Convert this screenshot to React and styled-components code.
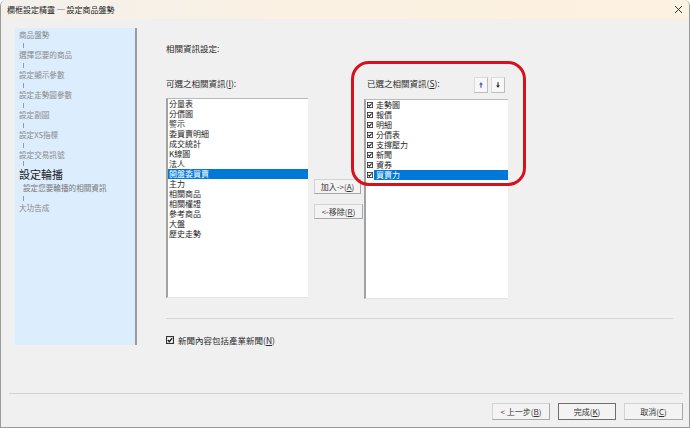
import React from "react";
import styled, { createGlobalStyle } from "styled-components";

const GlobalStyle = createGlobalStyle`
  html, body {
    margin: 0;
    padding: 0;
    background: #ffffff;
  }
  body {
    font-family: "Noto Sans CJK TC", "Noto Sans", sans-serif;
  }
`;

const sideSteps = [
  { text: "商品盤勢" },
  { text: "選擇您要的商品" },
  { text: "設定顯示參數" },
  { text: "設定走勢圖參數" },
  { text: "設定副圖" },
  { text: "設定XS指標" },
  { text: "設定交易訊號" },
  { text: "設定輪播", current: true, sub: "設定您要輪播的相關資訊" },
  { text: "大功告成" },
];

const availableItems = [
  "分量表",
  "分價圖",
  "警示",
  "委買賣明細",
  "成交統計",
  "K線圖",
  "法人",
  "開盤委買賣",
  "主力",
  "相關商品",
  "相關權證",
  "參考商品",
  "大盤",
  "歷史走勢",
];

const chosenItems = ["走勢圖", "報價", "明細", "分價表", "支撐壓力", "新聞", "資券", "買賣力"];

const CheckMark = ({ size = 7 }) => (
  <svg width={size} height={size} viewBox="0 0 7 7">
    <rect x="0.5" y="0.5" width="6" height="6" fill="#fff" stroke="#333" strokeWidth="1" />
    <path d="M1.6 3.4 L2.9 4.9 L5.4 1.8" fill="none" stroke="#111" strokeWidth="1.2" />
  </svg>
);

export default function App() {
  return (
    <>
      <GlobalStyle />
      <Window>
        <TitleBar>
          <Title>欄框設定精靈 ─ 設定商品盤勢</Title>
          <svg width="9" height="9" viewBox="0 0 9 9">
            <path d="M1 1 L8 8 M8 1 L1 8" stroke="#333" strokeWidth="1" />
          </svg>
        </TitleBar>

        <Body>
          <Sidebar>
            {sideSteps.map((s, i) => (
              <React.Fragment key={s.text}>
                {i > 0 && <Connector $short={s.current} />}
                <Step $current={s.current}>{s.text}</Step>
                {s.sub && <SubStep>{s.sub}</SubStep>}
              </React.Fragment>
            ))}
          </Sidebar>

          <Main>
            <Label>相關資訊設定:</Label>
            <Lists>
              <Column>
                <Header>
                  <Label>
                    可選之相關資訊(<u>I</u>):
                  </Label>
                </Header>
                <ListBox>
                  {availableItems.map((t) => (
                    <Item key={t} $selected={t === "開盤委買賣"}>
                      {t}
                    </Item>
                  ))}
                </ListBox>
              </Column>

              <MoveButtons>
                <Button $w={47}>
                  加入-&gt;(<u>A</u>)
                </Button>
                <Button $w={49}>
                  &lt;-移除(<u>R</u>)
                </Button>
              </MoveButtons>

              <Column $highlight>
                <Header $right>
                  <Label>
                    已選之相關資訊(<u>S</u>):
                  </Label>
                  <OrderButtons>
                    <SmallButton>
                      <svg width="4" height="6" viewBox="0 0 5 7">
                        <path d="M2.5 0 L5 3 L3.2 3 L3.2 7 L1.8 7 L1.8 3 L0 3 Z" fill="#3b4fc4" />
                      </svg>
                    </SmallButton>
                    <SmallButton>
                      <svg width="4" height="6" viewBox="0 0 5 7">
                        <path d="M2.5 7 L5 4 L3.2 4 L3.2 0 L1.8 0 L1.8 4 L0 4 Z" fill="#222" />
                      </svg>
                    </SmallButton>
                  </OrderButtons>
                </Header>
                <ListBox $right>
                  {chosenItems.map((t) => (
                    <CheckItem key={t}>
                      <CheckMark size={6} />
                      <ItemText $selected={t === "買賣力"}>{t}</ItemText>
                    </CheckItem>
                  ))}
                </ListBox>
                <RedMark />
              </Column>
            </Lists>

            <Separator />

            <CheckRow>
              <CheckMark size={8} />
              <span>
                新聞內容包括產業新聞(<u>N</u>)
              </span>
            </CheckRow>
          </Main>
        </Body>

        <Footer>
          <Button $w={58} $h={17}>
            &lt; 上一步(<u>B</u>)
          </Button>
          <Button $w={58} $h={17} $default>
            完成(<u>K</u>)
          </Button>
          <Button $w={59} $h={17}>
            取消(<u>C</u>)
          </Button>
        </Footer>
      </Window>
    </>
  );
}

const Window = styled.div`
  width: 688px;
  height: 427px;
  background: #f0f0f0;
  border: 1px solid #9a9a9a;
  border-top: none;
  border-radius: 6px 6px 0 0;
  display: flex;
  flex-direction: column;
  overflow: hidden;
  color: #222;
  font-size: 8px;
`;

const TitleBar = styled.div`
  height: 19px;
  flex: none;
  display: flex;
  align-items: center;
  justify-content: space-between;
  padding: 0 6px 0 6px;
  background: linear-gradient(to right, #f3f0ec 0%, #fbf1e2 45%, #fdf2e1 100%);
  border-bottom: 1px solid #f4efe6;
`;

const Title = styled.span`
  font-size: 8px;
  color: #1a1a1a;
  line-height: 19px;
`;

const Body = styled.div`
  height: 373px;
  flex: none;
  display: flex;
  padding: 8px 16px 0 14px;
  box-sizing: border-box;
`;

const Sidebar = styled.div`
  width: 116px;
  height: 315px;
  flex: none;
  background: #dcedfd;
  border-right: 2px solid #9b9b9b;
  padding: 2px 0 0 4px;
  box-sizing: content-box;
  display: flex;
  flex-direction: column;
  color: #8a8a8a;
  font-size: 7.6px;
`;

const Step = styled.div`
  line-height: 10px;
  height: 10px;
  white-space: nowrap;
  ${(p) =>
    p.$current &&
    `
    font-size: 11px;
    color: #222;
    line-height: 14px;
    height: 14px;
  `}
`;

const SubStep = styled.div`
  line-height: 10px;
  height: 10px;
  margin-top: 2px;
  padding-left: 4px;
  color: #777;
  white-space: nowrap;
`;

const Connector = styled.div`
  height: ${(p) => (p.$short ? 7 : 10)}px;
  display: flex;
  align-items: center;
  padding-left: 4px;

  &::before {
    content: "";
    width: 1px;
    height: 5px;
    background: #9a9a9a;
  }
`;

const Main = styled.div`
  flex: 1;
  display: flex;
  flex-direction: column;
  padding: 14px 0 0 29px;
`;

const Label = styled.div`
  line-height: 12px;
  height: 12px;
  font-size: 8.5px;
  color: #2a2a2a;
  white-space: nowrap;
`;

const Lists = styled.div`
  margin-top: 23px;
  display: flex;
  align-items: flex-start;
`;

const Column = styled.div`
  position: relative;
  width: ${(p) => (p.$highlight ? 144 : 142)}px;
  display: flex;
  flex-direction: column;
`;

const Header = styled.div`
  height: ${(p) => (p.$right ? 22 : 21)}px;
  display: flex;
  justify-content: space-between;
  align-items: flex-start;
  padding: 0 ${(p) => (p.$right ? "3px" : "0")};
`;

const OrderButtons = styled.div`
  display: flex;
  gap: 3px;
`;

const SmallButton = styled.div`
  width: 14px;
  height: 16px;
  box-sizing: border-box;
  background: #f7f7f7;
  border: 1px solid #dcdcdc;
  border-right-color: #bdbdbd;
  border-bottom-color: #bdbdbd;
  display: flex;
  align-items: center;
  justify-content: center;
`;

const ListBox = styled.div`
  height: 200px;
  box-sizing: border-box;
  background: #ffffff;
  border-top: 1px solid #b9b9b9;
  border-left: 2px solid #a2a2a2;
  border-bottom: 1px solid #e4e4e4;
  display: flex;
  flex-direction: column;
  overflow: hidden;
`;

const Item = styled.div`
  height: 10px;
  line-height: 10px;
  padding-left: 1px;
  white-space: nowrap;
  background: ${(p) => (p.$selected ? "#0078d7" : "transparent")};
  color: ${(p) => (p.$selected ? "#ffffff" : "#1e1e1e")};
`;

const CheckItem = styled.div`
  height: 10px;
  display: flex;
  align-items: center;
  padding-left: 1px;
  gap: 1px;
`;

const ItemText = styled.span`
  flex: 1;
  height: 10px;
  line-height: 10px;
  padding-left: 2px;
  white-space: nowrap;
  background: ${(p) => (p.$selected ? "#0078d7" : "transparent")};
  color: ${(p) => (p.$selected ? "#ffffff" : "#1e1e1e")};
`;

const MoveButtons = styled.div`
  width: 56px;
  flex: none;
  padding: 102px 0 0 6px;
  box-sizing: border-box;
  display: flex;
  flex-direction: column;
  gap: 10px;
`;

const Button = styled.div`
  width: ${(p) => p.$w}px;
  height: ${(p) => p.$h || 15}px;
  box-sizing: border-box;
  background: #f3f3f3;
  border: 1px solid ${(p) => (p.$default ? "#6e6e6e" : "#d2d2d2")};
  border-right-color: ${(p) => (p.$default ? "#6e6e6e" : "#a8a8a8")};
  border-bottom-color: ${(p) => (p.$default ? "#6e6e6e" : "#a8a8a8")};
  display: flex;
  align-items: center;
  justify-content: center;
  font-size: 8px;
  color: #333;
  white-space: nowrap;
`;

const RedMark = styled.div`
  position: absolute;
  left: -13px;
  top: -16px;
  width: 175px;
  height: 125px;
  box-sizing: border-box;
  border: 3px solid #d4121c;
  border-radius: 18px;
  pointer-events: none;
`;

const Separator = styled.div`
  height: 1px;
  background: #d6d6d6;
  margin: 19px 0 0 0;
  width: 507px;
`;

const CheckRow = styled.div`
  margin-top: 15px;
  display: flex;
  align-items: center;
  gap: 4px;
  height: 12px;
  font-size: 8.5px;
  color: #2a2a2a;
`;

const Footer = styled.div`
  flex: none;
  margin: 0 6px 0 8px;
  border-top: 1px solid #d3d3d3;
  padding: 9px 0 0 0;
  display: flex;
  justify-content: flex-end;
  gap: 8px;
`;
